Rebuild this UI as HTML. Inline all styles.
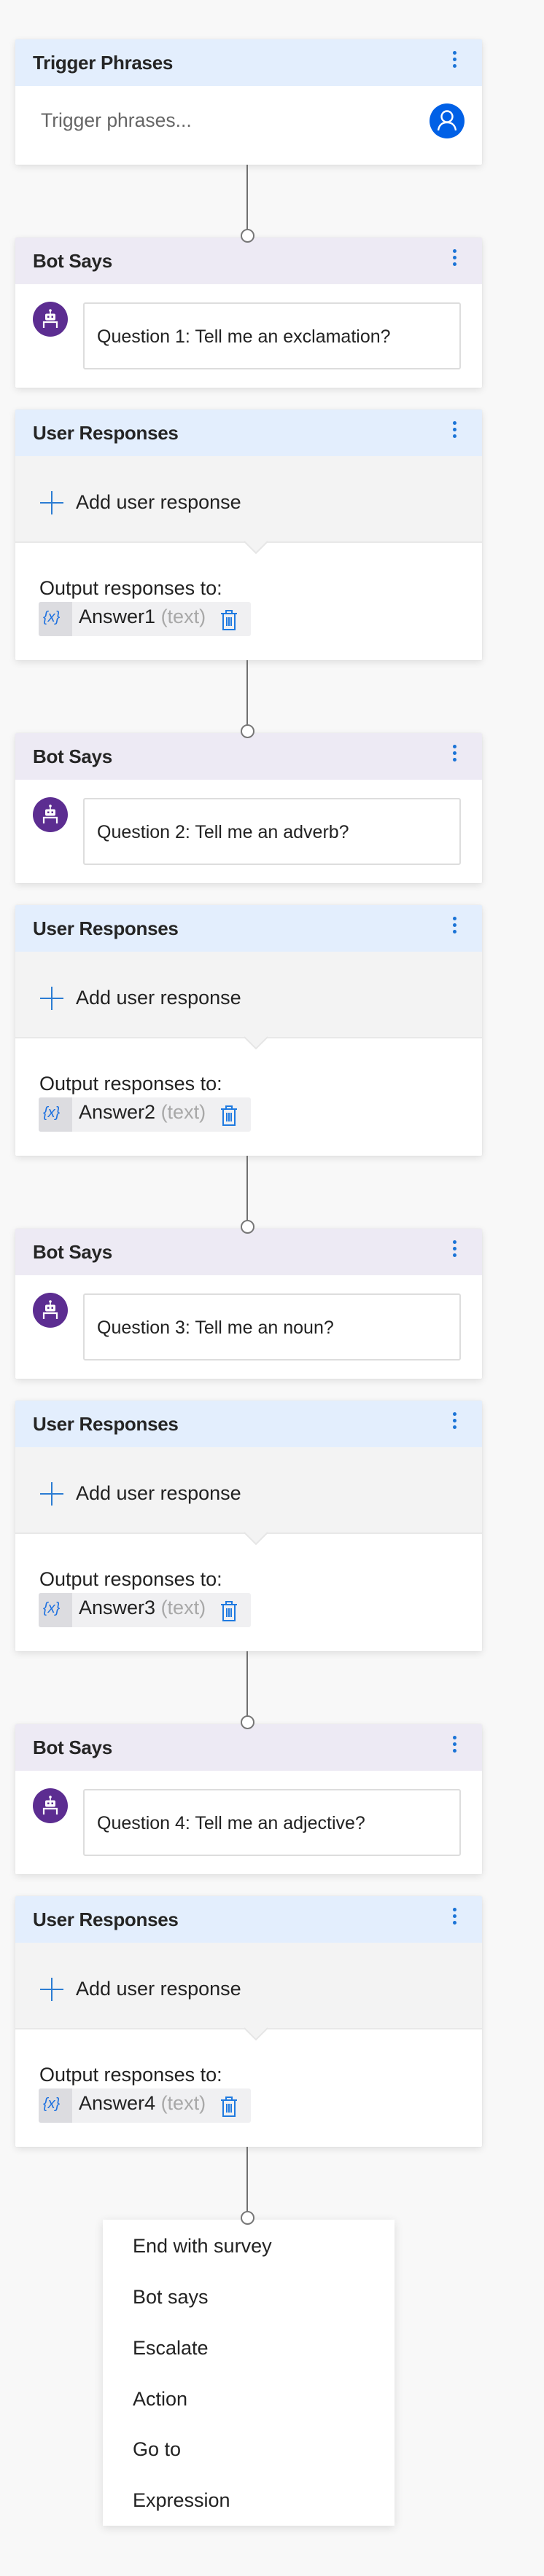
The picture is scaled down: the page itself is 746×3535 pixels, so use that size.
<!DOCTYPE html>
<html><head><meta charset="utf-8">
<style>
*{margin:0;padding:0;box-sizing:border-box}
body{width:746px;height:3535px;background:#f8f8f8;position:relative;overflow:hidden;font-family:"Liberation Sans",sans-serif;color:#222}
.card{position:absolute;left:21px;width:640px;background:#fff;box-shadow:0 3px 10px rgba(0,0,0,.10),0 0 2px rgba(0,0,0,.06);border-radius:2px;overflow:hidden}
.hdr{position:absolute;left:0;top:0;width:640px;height:64px}
.hdr .t{position:absolute;left:24px;top:17px;font-size:26px;font-weight:bold;color:#252525;letter-spacing:-0.3px}
.dots{position:absolute;left:600px;top:12px;width:5px;height:40px}
.dots i{position:absolute;left:0;width:5px;height:5px;border-radius:50%;background:#1a73d6}
.line{position:absolute;left:338px;width:2px;background:#707070}
.circ{position:absolute;left:330px;width:19px;height:19px;border:2px solid #777;border-radius:50%;background:#fff;z-index:5}
.txt{position:absolute;font-size:27px;white-space:nowrap}
.q{font-size:25px;top:122px !important}
</style></head><body>

<div class="card" style="top:54px;height:172px">
  <div class="hdr" style="background:#e3eefd"><div class="t">Trigger Phrases</div><div class="dots"><i style="top:4px"></i><i style="top:13px"></i><i style="top:22px"></i></div></div>
  <div class="txt" style="left:35px;top:96px;color:#666;font-size:26.5px">Trigger phrases...</div>
  <svg style="position:absolute;left:568px;top:88px" width="48" height="48" viewBox="0 0 48 48"><circle cx="24" cy="24" r="24" fill="#0060e6"/><circle cx="24" cy="18" r="7.5" fill="none" stroke="#fff" stroke-width="2.4"/><path d="M12 37 C13 29 18 26 24 26 C30 26 35 29 36 37" fill="none" stroke="#fff" stroke-width="2.4"/></svg>
</div>

<!-- G1 -->
<div class="line" style="top:226px;height:98px"></div><div class="circ" style="top:314px"></div>
<div class="card" style="top:326px;height:206px">
  <div class="hdr" style="background:#edeaf4"><div class="t">Bot Says</div><div class="dots"><i style="top:4px"></i><i style="top:13px"></i><i style="top:22px"></i></div></div>
  <svg style="position:absolute;left:24px;top:88px" width="48" height="48" viewBox="0 0 48 48"><circle cx="24" cy="24" r="24" fill="#5c2d91"/><circle cx="24" cy="12" r="1.8" fill="#fff"/><rect x="23.2" y="12" width="1.6" height="5" fill="#fff"/><rect x="17" y="16.5" width="14" height="9" rx="2" fill="#fff"/><rect x="20" y="19.5" width="2.5" height="2.5" fill="#5c2d91"/><rect x="25.5" y="19.5" width="2.5" height="2.5" fill="#5c2d91"/><path d="M15 36 V28 H33 V36" fill="none" stroke="#fff" stroke-width="2.2"/></svg>
  <div style="position:absolute;left:93px;top:89px;width:518px;height:92px;border:2px solid #ddd;border-radius:3px"></div>
  <div class="txt q" style="left:112px">Question 1: Tell me an exclamation?</div>
</div>
<div class="card" style="top:562px;height:344px">
  <div class="hdr" style="background:#e3eefd"><div class="t">User Responses</div><div class="dots"><i style="top:4px"></i><i style="top:13px"></i><i style="top:22px"></i></div></div>
  <div style="position:absolute;left:0;top:64px;width:640px;height:119px;background:#f3f3f3;border-bottom:2px solid #e8e8e8"></div>
  <svg style="position:absolute;left:313px;top:180px" width="34" height="18" viewBox="0 0 34 18"><path d="M0 0 L17 17 L34 0 Z" fill="#f3f3f3"/><path d="M1 1 L17 17 L33 1" fill="none" stroke="#e6e6e6" stroke-width="2"/></svg>
  <div style="position:absolute;left:34px;top:127px;width:32px;height:2px;background:#2b7cd3"></div><div style="position:absolute;left:49px;top:112px;width:2px;height:32px;background:#2b7cd3"></div>
  <div class="txt" style="left:83px;top:112px">Add user response</div>
  <div class="txt" style="left:33px;top:230px">Output responses to:</div>
  <div style="position:absolute;left:32px;top:264px;width:291px;height:47px;background:#f0f0f2;border-radius:3px"></div>
  <div style="position:absolute;left:32px;top:264px;width:46px;height:47px;background:#dcdce0;border-radius:3px 0 0 3px"></div>
  <div class="txt" style="left:38px;top:274px;font-size:20px;color:#1a6fe0;font-style:italic">{x}</div>
  <div class="txt" style="left:87px;top:269px">Answer1 <span style="color:#a8a8a8">(text)</span></div>
  <svg style="position:absolute;left:281px;top:275px" width="24" height="28" viewBox="0 0 24 28"><path d="M1 5 H23 M8 5 V1 H16 V5 M4 5 V27 H20 V5 M9 10 V22 M12 10 V22 M15 10 V22" fill="none" stroke="#1f7ae0" stroke-width="2"/></svg>
</div>

<!-- G2 -->
<div class="line" style="top:906px;height:98px"></div><div class="circ" style="top:994px"></div>
<div class="card" style="top:1006px;height:206px">
  <div class="hdr" style="background:#edeaf4"><div class="t">Bot Says</div><div class="dots"><i style="top:4px"></i><i style="top:13px"></i><i style="top:22px"></i></div></div>
  <svg style="position:absolute;left:24px;top:88px" width="48" height="48" viewBox="0 0 48 48"><circle cx="24" cy="24" r="24" fill="#5c2d91"/><circle cx="24" cy="12" r="1.8" fill="#fff"/><rect x="23.2" y="12" width="1.6" height="5" fill="#fff"/><rect x="17" y="16.5" width="14" height="9" rx="2" fill="#fff"/><rect x="20" y="19.5" width="2.5" height="2.5" fill="#5c2d91"/><rect x="25.5" y="19.5" width="2.5" height="2.5" fill="#5c2d91"/><path d="M15 36 V28 H33 V36" fill="none" stroke="#fff" stroke-width="2.2"/></svg>
  <div style="position:absolute;left:93px;top:89px;width:518px;height:92px;border:2px solid #ddd;border-radius:3px"></div>
  <div class="txt q" style="left:112px">Question 2: Tell me an adverb?</div>
</div>
<div class="card" style="top:1242px;height:344px">
  <div class="hdr" style="background:#e3eefd"><div class="t">User Responses</div><div class="dots"><i style="top:4px"></i><i style="top:13px"></i><i style="top:22px"></i></div></div>
  <div style="position:absolute;left:0;top:64px;width:640px;height:119px;background:#f3f3f3;border-bottom:2px solid #e8e8e8"></div>
  <svg style="position:absolute;left:313px;top:180px" width="34" height="18" viewBox="0 0 34 18"><path d="M0 0 L17 17 L34 0 Z" fill="#f3f3f3"/><path d="M1 1 L17 17 L33 1" fill="none" stroke="#e6e6e6" stroke-width="2"/></svg>
  <div style="position:absolute;left:34px;top:127px;width:32px;height:2px;background:#2b7cd3"></div><div style="position:absolute;left:49px;top:112px;width:2px;height:32px;background:#2b7cd3"></div>
  <div class="txt" style="left:83px;top:112px">Add user response</div>
  <div class="txt" style="left:33px;top:230px">Output responses to:</div>
  <div style="position:absolute;left:32px;top:264px;width:291px;height:47px;background:#f0f0f2;border-radius:3px"></div>
  <div style="position:absolute;left:32px;top:264px;width:46px;height:47px;background:#dcdce0;border-radius:3px 0 0 3px"></div>
  <div class="txt" style="left:38px;top:274px;font-size:20px;color:#1a6fe0;font-style:italic">{x}</div>
  <div class="txt" style="left:87px;top:269px">Answer2 <span style="color:#a8a8a8">(text)</span></div>
  <svg style="position:absolute;left:281px;top:275px" width="24" height="28" viewBox="0 0 24 28"><path d="M1 5 H23 M8 5 V1 H16 V5 M4 5 V27 H20 V5 M9 10 V22 M12 10 V22 M15 10 V22" fill="none" stroke="#1f7ae0" stroke-width="2"/></svg>
</div>

<!-- G3 -->
<div class="line" style="top:1586px;height:98px"></div><div class="circ" style="top:1674px"></div>
<div class="card" style="top:1686px;height:206px">
  <div class="hdr" style="background:#edeaf4"><div class="t">Bot Says</div><div class="dots"><i style="top:4px"></i><i style="top:13px"></i><i style="top:22px"></i></div></div>
  <svg style="position:absolute;left:24px;top:88px" width="48" height="48" viewBox="0 0 48 48"><circle cx="24" cy="24" r="24" fill="#5c2d91"/><circle cx="24" cy="12" r="1.8" fill="#fff"/><rect x="23.2" y="12" width="1.6" height="5" fill="#fff"/><rect x="17" y="16.5" width="14" height="9" rx="2" fill="#fff"/><rect x="20" y="19.5" width="2.5" height="2.5" fill="#5c2d91"/><rect x="25.5" y="19.5" width="2.5" height="2.5" fill="#5c2d91"/><path d="M15 36 V28 H33 V36" fill="none" stroke="#fff" stroke-width="2.2"/></svg>
  <div style="position:absolute;left:93px;top:89px;width:518px;height:92px;border:2px solid #ddd;border-radius:3px"></div>
  <div class="txt q" style="left:112px">Question 3: Tell me an noun?</div>
</div>
<div class="card" style="top:1922px;height:344px">
  <div class="hdr" style="background:#e3eefd"><div class="t">User Responses</div><div class="dots"><i style="top:4px"></i><i style="top:13px"></i><i style="top:22px"></i></div></div>
  <div style="position:absolute;left:0;top:64px;width:640px;height:119px;background:#f3f3f3;border-bottom:2px solid #e8e8e8"></div>
  <svg style="position:absolute;left:313px;top:180px" width="34" height="18" viewBox="0 0 34 18"><path d="M0 0 L17 17 L34 0 Z" fill="#f3f3f3"/><path d="M1 1 L17 17 L33 1" fill="none" stroke="#e6e6e6" stroke-width="2"/></svg>
  <div style="position:absolute;left:34px;top:127px;width:32px;height:2px;background:#2b7cd3"></div><div style="position:absolute;left:49px;top:112px;width:2px;height:32px;background:#2b7cd3"></div>
  <div class="txt" style="left:83px;top:112px">Add user response</div>
  <div class="txt" style="left:33px;top:230px">Output responses to:</div>
  <div style="position:absolute;left:32px;top:264px;width:291px;height:47px;background:#f0f0f2;border-radius:3px"></div>
  <div style="position:absolute;left:32px;top:264px;width:46px;height:47px;background:#dcdce0;border-radius:3px 0 0 3px"></div>
  <div class="txt" style="left:38px;top:274px;font-size:20px;color:#1a6fe0;font-style:italic">{x}</div>
  <div class="txt" style="left:87px;top:269px">Answer3 <span style="color:#a8a8a8">(text)</span></div>
  <svg style="position:absolute;left:281px;top:275px" width="24" height="28" viewBox="0 0 24 28"><path d="M1 5 H23 M8 5 V1 H16 V5 M4 5 V27 H20 V5 M9 10 V22 M12 10 V22 M15 10 V22" fill="none" stroke="#1f7ae0" stroke-width="2"/></svg>
</div>

<!-- G4 -->
<div class="line" style="top:2266px;height:98px"></div><div class="circ" style="top:2354px"></div>
<div class="card" style="top:2366px;height:206px">
  <div class="hdr" style="background:#edeaf4"><div class="t">Bot Says</div><div class="dots"><i style="top:4px"></i><i style="top:13px"></i><i style="top:22px"></i></div></div>
  <svg style="position:absolute;left:24px;top:88px" width="48" height="48" viewBox="0 0 48 48"><circle cx="24" cy="24" r="24" fill="#5c2d91"/><circle cx="24" cy="12" r="1.8" fill="#fff"/><rect x="23.2" y="12" width="1.6" height="5" fill="#fff"/><rect x="17" y="16.5" width="14" height="9" rx="2" fill="#fff"/><rect x="20" y="19.5" width="2.5" height="2.5" fill="#5c2d91"/><rect x="25.5" y="19.5" width="2.5" height="2.5" fill="#5c2d91"/><path d="M15 36 V28 H33 V36" fill="none" stroke="#fff" stroke-width="2.2"/></svg>
  <div style="position:absolute;left:93px;top:89px;width:518px;height:92px;border:2px solid #ddd;border-radius:3px"></div>
  <div class="txt q" style="left:112px">Question 4: Tell me an adjective?</div>
</div>
<div class="card" style="top:2602px;height:344px">
  <div class="hdr" style="background:#e3eefd"><div class="t">User Responses</div><div class="dots"><i style="top:4px"></i><i style="top:13px"></i><i style="top:22px"></i></div></div>
  <div style="position:absolute;left:0;top:64px;width:640px;height:119px;background:#f3f3f3;border-bottom:2px solid #e8e8e8"></div>
  <svg style="position:absolute;left:313px;top:180px" width="34" height="18" viewBox="0 0 34 18"><path d="M0 0 L17 17 L34 0 Z" fill="#f3f3f3"/><path d="M1 1 L17 17 L33 1" fill="none" stroke="#e6e6e6" stroke-width="2"/></svg>
  <div style="position:absolute;left:34px;top:127px;width:32px;height:2px;background:#2b7cd3"></div><div style="position:absolute;left:49px;top:112px;width:2px;height:32px;background:#2b7cd3"></div>
  <div class="txt" style="left:83px;top:112px">Add user response</div>
  <div class="txt" style="left:33px;top:230px">Output responses to:</div>
  <div style="position:absolute;left:32px;top:264px;width:291px;height:47px;background:#f0f0f2;border-radius:3px"></div>
  <div style="position:absolute;left:32px;top:264px;width:46px;height:47px;background:#dcdce0;border-radius:3px 0 0 3px"></div>
  <div class="txt" style="left:38px;top:274px;font-size:20px;color:#1a6fe0;font-style:italic">{x}</div>
  <div class="txt" style="left:87px;top:269px">Answer4 <span style="color:#a8a8a8">(text)</span></div>
  <svg style="position:absolute;left:281px;top:275px" width="24" height="28" viewBox="0 0 24 28"><path d="M1 5 H23 M8 5 V1 H16 V5 M4 5 V27 H20 V5 M9 10 V22 M12 10 V22 M15 10 V22" fill="none" stroke="#1f7ae0" stroke-width="2"/></svg>
</div>

<!-- Menu -->
<div class="line" style="top:2946px;height:98px"></div><div class="circ" style="top:3034px"></div>
<div style="position:absolute;left:141px;top:3046px;width:400px;height:420px;background:#fff;box-shadow:0 3px 12px rgba(0,0,0,.12)">
  <div class="txt" style="left:41px;top:21px">End with survey</div>
  <div class="txt" style="left:41px;top:91px">Bot says</div>
  <div class="txt" style="left:41px;top:161px">Escalate</div>
  <div class="txt" style="left:41px;top:231px">Action</div>
  <div class="txt" style="left:41px;top:300px">Go to</div>
  <div class="txt" style="left:41px;top:370px">Expression</div>
</div>
</body></html>
